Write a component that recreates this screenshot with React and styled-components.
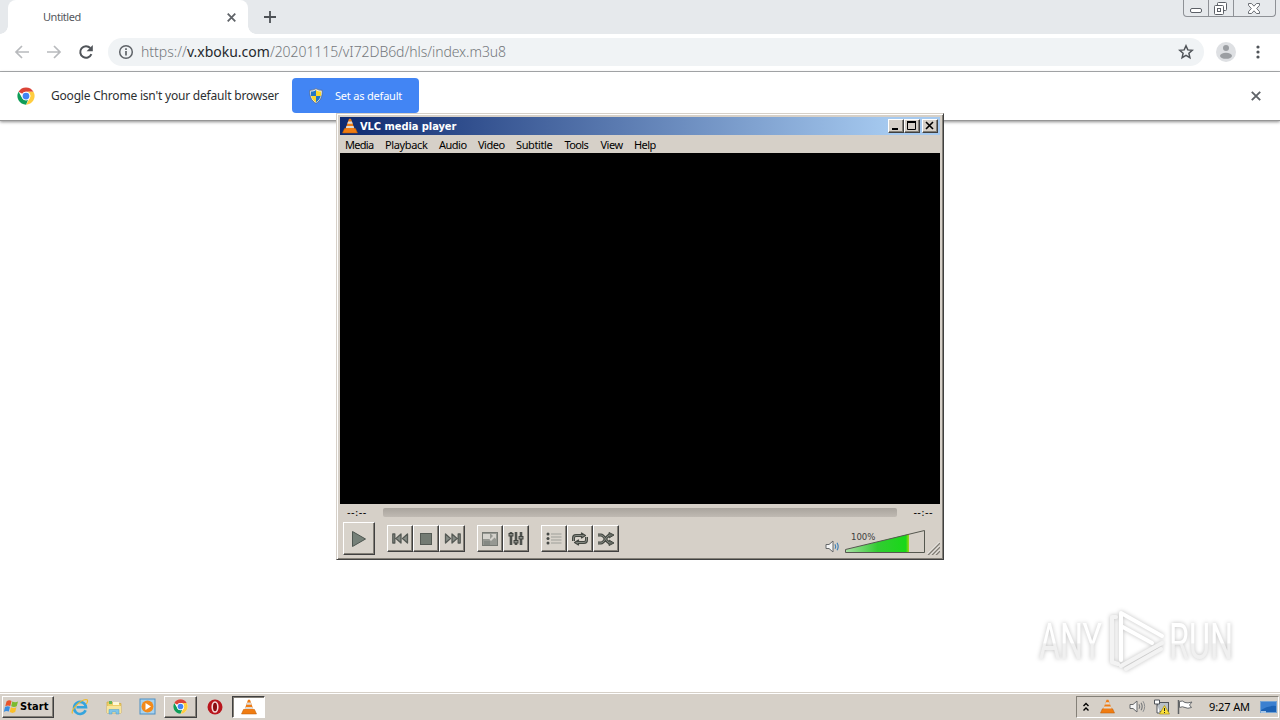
import React from "react";
import styled, { createGlobalStyle, css } from "styled-components";

const GlobalStyle = createGlobalStyle`
  * { box-sizing: border-box; }
  body { margin: 0; overflow: hidden; background: #fff; }
  svg { display: block; flex: none; }
`;

const ui = `"DejaVu Sans Condensed", "DejaVu Sans", sans-serif`;
const thin = `"Noto Sans", "DejaVu Sans", sans-serif`;

const Desktop = styled.div`
  position: relative;
  width: 1280px;
  height: 720px;
  display: flex;
  flex-direction: column;
  overflow: hidden;
  background: #fff;
  font-family: ${thin};
`;

const Label = styled.span`
  font-family: ${(p) => p.$font || thin};
  font-size: ${(p) => p.$size || 11}px;
  font-weight: ${(p) => p.$weight || 400};
  letter-spacing: ${(p) => p.$track || 0}px;
  color: ${(p) => p.$color || "#000"};
  line-height: 16px;
  white-space: pre;
`;

/* Browser */
const TabStrip = styled.div`
  height: 34px;
  flex: none;
  display: flex;
  padding-left: 8px;
  background: #e6e9ec;
`;
const Tab = styled.div`
  position: relative;
  width: 240px;
  height: 34px;
  display: flex;
  align-items: center;
  justify-content: space-between;
  padding: 0 12px 0 35px;
  background: #fff;
  border-radius: 8px 8px 0 0;
  &::before, &::after {
    content: "";
    position: absolute;
    bottom: 0;
    width: 8px;
    height: 8px;
  }
  &::before { left: -8px; background: radial-gradient(circle at 0 0, transparent 7.5px, #fff 8px); }
  &::after { right: -8px; background: radial-gradient(circle at 100% 0, transparent 7.5px, #fff 8px); }
`;
const NewTab = styled.div`
  padding: 11px 0 0 16px;
  flex: 1;
`;
const Caption = styled.div`
  display: flex;
  width: 93px;
  height: 17px;
  margin-right: 4px;
  border: 1px solid #8e9196;
  border-top: 0;
  border-radius: 0 0 4px 4px;
`;
const CaptionButton = styled.div`
  width: ${(p) => p.$w}px;
  padding: ${(p) => p.$pad};
  border-left: ${(p) => (p.$first ? "0" : "1px solid #8e9196")};
`;
const Toolbar = styled.div`
  height: 38px;
  flex: none;
  display: flex;
  align-items: center;
  padding: 0 12px 2px 12px;
  border-bottom: 1px solid #adafb2;
`;
const NavButton = styled.div`
  width: 32px;
  display: flex;
  padding-left: 2px;
`;
const Omnibox = styled.div`
  width: 1096px;
  height: 28px;
  display: flex;
  align-items: center;
  padding: 0 10px;
  border-radius: 14px;
  background: #f0f3f5;
`;
const Address = styled.div`
  flex: 1;
  padding-left: 7px;
  display: flex;
`;
const ToolbarEnd = styled.div`
  display: flex;
  align-items: center;
  gap: 20px;
  padding-left: 12px;
`;
const InfoBar = styled.div`
  height: 49px;
  flex: none;
  display: flex;
  align-items: center;
  padding: 0 19px 1px 17px;
  border-bottom: 1px solid #969696;
  box-shadow: 0 1px 3px rgba(0, 0, 0, 0.45);
`;
const InfoText = styled.div`
  width: 257px;
  padding-left: 16px;
  flex: none;
  display: flex;
`;
const DefaultButton = styled.div`
  width: 127px;
  height: 35px;
  display: flex;
  align-items: center;
  gap: 12px;
  padding-left: 17px;
  border-radius: 4px;
  background: #4285f4;
  margin-right: auto;
`;
const PageArea = styled.div`
  flex: 1;
`;

/* Classic window */
const raised = css`
  border: 1px solid;
  border-color: #fff #404040 #404040 #fff;
  box-shadow: inset -1px -1px 0 #848078;
`;
const Window = styled.div`
  position: absolute;
  left: 336px;
  top: 113px;
  width: 608px;
  height: 447px;
  display: flex;
  flex-direction: column;
  background: #d6d0c8;
  border: 1px solid;
  border-color: #d6d0c8 #404040 #404040 #d6d0c8;
  box-shadow: inset 1px 1px 0 #fff, inset -1px -1px 0 #848078;
  padding: 3px;
`;
const TitleBar = styled.div`
  height: 18px;
  flex: none;
  display: flex;
  align-items: center;
  padding: 0 2px;
  background: linear-gradient(90deg, #0e2a70, #a6caf0 92%);
`;
const TitleText = styled.div`
  flex: 1;
  padding: 1px 0 0 2px;
  display: flex;
`;
const WinButton = styled.div`
  width: 16px;
  height: 14px;
  margin-left: ${(p) => p.$gap || 0}px;
  background: #d6d0c8;
  ${raised}
`;
const MenuBar = styled.div`
  height: 18px;
  flex: none;
  display: flex;
  align-items: center;
  padding: 2px 5px 0;
`;
const MenuItem = styled.div`
  width: ${(p) => p.$w}px;
  flex: none;
  display: flex;
`;
const Video = styled.div`
  height: 351px;
  flex: none;
  background: #000;
`;
const SeekRow = styled.div`
  height: 17px;
  flex: none;
  display: flex;
  align-items: center;
  padding: 0 7px;
`;
const TimeMark = styled.div`
  width: ${(p) => p.$w}px;
  display: flex;
  justify-content: ${(p) => (p.$end ? "flex-end" : "flex-start")};
`;
const SeekTrack = styled.div`
  width: 514px;
  height: 9px;
  border-radius: 2px;
  background: linear-gradient(#a9a49d, #c0bab3);
`;
const Controls = styled.div`
  flex: 1;
  display: flex;
  padding: 1px 0 0 3px;
`;
const PlayerButton = styled.div`
  width: ${(p) => (p.$big ? 32 : 26)}px;
  height: ${(p) => (p.$big ? 33 : 27)}px;
  flex: none;
  display: flex;
  align-items: center;
  justify-content: center;
  background: #d8d3cb;
  ${raised}
`;
const Group = styled.div`
  display: flex;
  flex: none;
  padding-top: 3px;
  margin-left: ${(p) => p.$gap}px;
`;
const Volume = styled.div`
  display: flex;
  flex: none;
  margin-left: 206px;
  padding-top: 7px;
`;
const VolumeIcon = styled.div`
  padding-top: 10px;
`;
const VolumeSlider = styled.div`
  position: relative;
  width: 81px;
  margin-left: 3px;
`;
const VolumeValue = styled.div`
  position: absolute;
  left: 6px;
  top: 0;
  display: flex;
`;
const Grip = styled.div`
  padding: 20px 0 0 1px;
`;

/* Taskbar */
const Taskbar = styled.div`
  height: 28px;
  flex: none;
  display: flex;
  align-items: center;
  padding: 2px 2px 2px;
  border-top: 1px solid #d6d0c8;
  box-shadow: inset 0 1px 0 #fff;
  background: #d6d0c8;
`;
const StartButton = styled.div`
  width: 52px;
  height: 22px;
  display: flex;
  align-items: center;
  padding-left: 0;
  margin-right: 9px;
  ${raised}
`;
const QuickItem = styled.div`
  width: ${(p) => p.$w || 34}px;
  height: 22px;
  flex: none;
  display: flex;
  align-items: center;
  justify-content: center;
`;
const TaskButton = styled.div`
  width: 33px;
  height: 22px;
  flex: none;
  display: flex;
  align-items: center;
  justify-content: center;
  background: ${(p) => (p.$active ? "#fff" : "#d6d0c8")};
  ${raised}
  ${(p) =>
    p.$active &&
    css`
      border-color: #404040 #fff #fff #404040;
      box-shadow: inset 1px 1px 0 #848078;
    `}
`;
const Tray = styled.div`
  width: 203px;
  height: 22px;
  flex: none;
  margin-left: auto;
  margin-right: -1px;
  display: flex;
  align-items: center;
  padding-left: 5px;
  border: 1px solid;
  border-color: #848078 #fff #fff #848078;
`;
const TrayItem = styled.div`
  width: ${(p) => p.$w}px;
  flex: none;
  display: flex;
`;

const Watermark = styled.div`
  position: absolute;
  left: 1030px;
  top: 600px;
  filter: drop-shadow(0 0 2px rgba(0, 0, 0, 0.25));
`;

const ChromeLogo = ({ size = 16 }) => (
  <svg width={size} height={size} viewBox="0 0 48 48">
    <circle cx="24" cy="24" r="23" fill="#fff" />
    <path d="M24 1a23 23 0 0 1 19.900 11.500H24A11.500 11.500 0 0 0 14 18.300L4.100 12.500A23 23 0 0 1 24 1z" fill="#db4437" />
    <path d="M43.900 12.500A23 23 0 0 1 24 47l10-17.300A11.500 11.500 0 0 0 34 18.200l-6-5.700z" fill="#ffcd40" />
    <path d="M24 47A23 23 0 0 1 4.100 12.500L14 29.700a11.500 11.500 0 0 0 15.500 4.500z" fill="#0f9d58" />
    <circle cx="24" cy="24" r="11.500" fill="#fff" />
    <circle cx="24" cy="24" r="9" fill="#4285f4" />
  </svg>
);

const Cone = ({ size = 16 }) => (
  <svg width={size} height={size} viewBox="0 0 16 16">
    <path d="M2.500 10.500h11l2 4.500H.5z" fill="#f07c10" stroke="#b95a08" strokeWidth=".5" />
    <path d="M7 .8h2l3.800 10.700c-2 1.500-7.600 1.500-9.600 0z" fill="#f07c14" />
    <path d="M6.100 3.500h3.800l.8 2.300H5.300zM4.500 8h7l.7 2H3.800z" fill="#dedbd6" />
  </svg>
);

const Cross = ({ size = 9, color = "#5f6368", w = 1.7 }) => (
  <svg width={size} height={size} viewBox="0 0 10 10">
    <path d="M.8.8l8.400 8.400M9.200.8L.8 9.200" stroke={color} strokeWidth={w} fill="none" />
  </svg>
);

const Shield = () => (
  <svg width="14" height="16" viewBox="0 0 14 16">
    <path d="M7 .6c2 1.300 4 1.700 6.200 1.700.3 6-1.400 10.500-6.200 13-4.800-2.500-6.500-7-6.200-13C3 2.300 5 1.900 7 .6z" fill="#e8eef4" stroke="#59606a" strokeWidth=".7" />
    <path d="M7 2v6H2V3.500C4 3.500 5.500 3 7 2zM7 8h4.700c-.6 2.600-2 4.700-4.700 6.200z" fill="#2376c6" />
    <path d="M7 2c1.500 1 3 1.500 5 1.500V8H7zM7 8v6.200C4.300 12.700 2.800 10.600 2.200 8z" fill="#fbd72b" />
  </svg>
);

const Speaker = ({ blue }) => (
  <svg width="17" height="15" viewBox="0 0 17 15">
    <path d="M1 5.500h3L8 2v11L4 9.500H1z" fill="#f5f5f5" stroke="#66686a" />
    <path d="M10 5.200q1.300 2.300 0 4.600M12 3.700q2.300 3.800 0 7.600" fill="none" stroke={blue ? "#3d80b8" : "#77797b"} strokeWidth="1.100" />
    {!blue && <path d="M14 2.200q3.300 5.300 0 10.600" fill="none" stroke="#8b8d8f" />}
  </svg>
);

const menu = [
  ["Media", 40, -0.7], ["Playback", 54, -0.35], ["Audio", 39, -0.5], ["Video", 38, -0.5],
  ["Subtitle", 48.5, -0.4], ["Tools", 36, -0.6], ["View", 33.5, -0.5], ["Help", 30, -0.6],
];

export default function App() {
  return (
    <Desktop>
      <GlobalStyle />
      <TabStrip>
        <Tab>
          <Label $size={11} $track={-0.45} $color="#55585c">Untitled</Label>
          <Cross size={9} w={2} />
        </Tab>
        <NewTab>
          <svg width="12" height="12" viewBox="0 0 12 12"><path d="M6 0v12M0 6h12" stroke="#4d5156" strokeWidth="1.800" /></svg>
        </NewTab>
        <Caption>
          <CaptionButton $w={24} $pad="8px 0 0 6px" $first>
            <svg width="12" height="5"><rect x=".5" y=".5" width="11" height="4" rx="1.500" fill="#fff" stroke="#5c6067" /></svg>
          </CaptionButton>
          <CaptionButton $w={25} $pad="2px 0 0 5px">
            <svg width="13" height="13" fill="#fff" stroke="#5c6067">
              <rect x="3.500" y=".5" width="9" height="8" rx="1" />
              <rect x=".5" y="3.500" width="9" height="9" rx="1" />
              <rect x="3.500" y="6.500" width="3" height="3" />
            </svg>
          </CaptionButton>
          <CaptionButton $w={42} $pad="3px 0 0 14px">
            <svg width="12" height="11" viewBox="0 0 12 11"><path d="M.5.5h3L6 3.200 8.500.5h3v1.800L8.700 5.500l2.800 3.200v1.800h-3L6 7.800l-2.500 2.700h-3V8.700l2.800-3.200L.5 2.300z" fill="#fff" stroke="#5c6067" strokeWidth=".9" /></svg>
          </CaptionButton>
        </Caption>
      </TabStrip>
      <Toolbar>
        <NavButton><svg width="16" height="16" viewBox="0 0 16 16"><path d="M15 8H2M8 2L2 8l6 6" fill="none" stroke="#b8babd" strokeWidth="1.700" /></svg></NavButton>
        <NavButton><svg width="16" height="16" viewBox="0 0 16 16"><path d="M1 8h13M8 2l6 6-6 6" fill="none" stroke="#b8babd" strokeWidth="1.700" /></svg></NavButton>
        <NavButton><svg width="16" height="16" viewBox="0 0 16 16"><path d="M13.400 10.200A5.800 5.800 0 1 1 12.300 4" fill="none" stroke="#505459" strokeWidth="2" /><path d="M14.800 1v6.200H8.600z" fill="#505459" /></svg></NavButton>
        <Omnibox>
          <svg width="16" height="16" viewBox="0 0 16 16"><circle cx="8" cy="8" r="6.300" fill="none" stroke="#5f6368" strokeWidth="1.500" /><path d="M8 7v4.500M8 4.200v1.700" stroke="#5f6368" strokeWidth="1.700" /></svg>
          <Address>
            <Label $size={14} $weight={300} $color="#74787c">https://</Label>
            <Label $size={14} $weight={400} $color="#25282c">v.xboku.com</Label>
            <Label $size={14} $weight={300} $track={-0.07} $color="#74787c">/20201115/vI72DB6d/hls/index.m3u8</Label>
          </Address>
          <svg width="16" height="16" viewBox="0 0 16 16"><path d="M8 1.800l1.800 4.100 4.500.4-3.400 3 1 4.400L8 11.400l-3.900 2.300 1-4.400-3.400-3 4.500-.4z" fill="none" stroke="#505459" strokeWidth="1.500" /></svg>
        </Omnibox>
        <ToolbarEnd>
          <svg width="20" height="20" viewBox="0 0 20 20"><circle cx="10" cy="10" r="10" fill="#dee0e3" /><circle cx="10" cy="6" r="3" fill="#9b9ea2" /><ellipse cx="10" cy="13.800" rx="6" ry="3" fill="#9b9ea2" /></svg>
          <svg width="4" height="14" fill="#505459"><circle cx="2" cy="2" r="1.600" /><circle cx="2" cy="7" r="1.600" /><circle cx="2" cy="12" r="1.600" /></svg>
        </ToolbarEnd>
      </Toolbar>
      <InfoBar>
        <ChromeLogo size={18} />
        <InfoText><Label $size={12} $track={-0.2} $color="#2d2f31">Google Chrome isn't your default browser</Label></InfoText>
        <DefaultButton>
          <Shield />
          <Label $size={11} $track={-0.2} $color="#fff">Set as default</Label>
        </DefaultButton>
        <Cross size={10} w={1.9} />
      </InfoBar>
      <PageArea />
      <Taskbar>
        <StartButton>
          <svg width="17" height="16" viewBox="0 0 17 16">
            <path d="M3.500 2.500q2.500-2 5-.5L7.300 7q-2.500-1.300-5 .2z" fill="#e8542a" />
            <path d="M9.300 2.400q3 1.600 5.700 0L13.700 7.200q-2.700 1.600-5.500 0z" fill="#7bbb30" />
            <path d="M2 8.100q2.500-1.600 5-.3L5.800 12.600q-2.500-1.300-5 .3z" fill="#3a8ee0" />
            <path d="M7.900 8.200q2.800 1.600 5.500 0l-1.200 4.900q-2.700 1.600-5.500 0z" fill="#fbc02a" />
          </svg>
          <Label $font={ui} $weight={700} $size={11} $track={0.1}>Start</Label>
        </StartButton>
        <QuickItem>
          <svg width="18" height="18" viewBox="0 0 18 18">
            <path d="M14.600 12.200A6 6 0 1 1 15 9.300H5.500" fill="none" stroke="#35a4dd" strokeWidth="2.600" />
            <path d="M1.500 15.500C-.5 12 9 2 15 1.500c2.500 0 1.500 3 .3 4.500" fill="none" stroke="#eebb2d" strokeWidth="1.200" />
          </svg>
        </QuickItem>
        <QuickItem>
          <svg width="16" height="16" viewBox="0 0 16 16">
            <path d="M1 3h5l1 1.500h8V14H1z" fill="#edcf68" stroke="#d2a93c" strokeWidth=".7" />
            <path d="M3 2h3v3H3z" fill="#67b558" /><path d="M7 3h6v3H7z" fill="#fff8d6" />
            <path d="M1 7h14v7H1z" fill="#f8e59b" />
            <path d="M3 15v-4.500h10V15h-3v-2H6v2z" fill="#7fc4e8" stroke="#4c9fcb" strokeWidth=".5" />
          </svg>
        </QuickItem>
        <QuickItem $w={33}>
          <svg width="17" height="17" viewBox="0 0 17 17">
            <rect x="1" y="1" width="15" height="15" fill="#a8d2ee" stroke="#4c8fc4" />
            <circle cx="8.500" cy="8.500" r="6" fill="#f28a1b" /><path d="M6.500 5l5.500 3.500L6.500 12z" fill="#fff" />
          </svg>
        </QuickItem>
        <TaskButton><ChromeLogo size={15} /></TaskButton>
        <QuickItem $w={35}>
          <svg width="16" height="16" viewBox="0 0 16 16"><circle cx="8" cy="8" r="7.500" fill="#b9151c" /><ellipse cx="8" cy="8" rx="2.800" ry="5" fill="#8a0b10" stroke="#f4dada" strokeWidth="1.600" /></svg>
        </QuickItem>
        <TaskButton $active><Cone size={16} /></TaskButton>
        <Tray>
          <TrayItem $w={18}>
            <svg width="8" height="10" viewBox="0 0 8 10"><path d="M1.500 4L4 1.500 6.500 4M1.500 8.500L4 6l2.500 2.500" fill="none" stroke="#000" strokeWidth="1.400" /></svg>
          </TrayItem>
          <TrayItem $w={29}><Cone size={15} /></TrayItem>
          <TrayItem $w={24}><Speaker /></TrayItem>
          <TrayItem $w={24}>
            <svg width="17" height="16" viewBox="0 0 17 16">
              <rect x="4.500" y="3.500" width="11" height="9" fill="#b9c0c6" stroke="#50545a" />
              <path d="M7 14.500h6" stroke="#50545a" />
              <path d="M1.500 1v4h5V1zM4 5v9h3" fill="#fff" stroke="#50545a" />
              <path d="M11.500 6.500l5 8.500h-10z" fill="#fce13a" stroke="#a98f13" strokeWidth=".7" /><path d="M11.500 9v3M11.500 13v1" stroke="#222" />
            </svg>
          </TrayItem>
          <TrayItem $w={32}>
            <svg width="17" height="16" viewBox="0 0 17 16"><path d="M1.500 1v14" stroke="#5f6265" strokeWidth="1.500" /><path d="M2.500 2.500q3-1.500 5.500 1 2.500 1 7-.5l-2.500 3 2 2.500q-4 1.500-6.500 0Q5.500 7 2.500 8.500z" fill="#fff" stroke="#66696c" /></svg>
          </TrayItem>
          <TrayItem $w={51}><Label $size={11} $track={-0.1}>9:27 AM</Label></TrayItem>
          <svg width="17" height="14" viewBox="0 0 17 14"><rect x=".5" y="1.500" width="16" height="11" fill="#1c62b5" stroke="#75a3d3" /><path d="M1 2h15v4Q8 5 1 10z" fill="#3b80d0" /><rect x="1" y="11" width="5" height="2" fill="#a7c5e4" /></svg>
        </Tray>
      </Taskbar>

      <Window>
        <TitleBar>
          <Cone size={16} />
          <TitleText><Label $font={ui} $weight={700} $size={11} $track={-0.05} $color="#fff">VLC media player</Label></TitleText>
          <WinButton><svg width="14" height="12"><path d="M3 9h6" stroke="#000" strokeWidth="2" /></svg></WinButton>
          <WinButton><svg width="14" height="12"><path d="M2.500 2v7.500h8V2M2 2h9" fill="none" stroke="#000" /><path d="M2 2h9" stroke="#000" strokeWidth="2" /></svg></WinButton>
          <WinButton $gap={2}><svg width="14" height="12"><path d="M3 2l7 7M10 2L3 9" stroke="#000" strokeWidth="1.600" /></svg></WinButton>
        </TitleBar>
        <MenuBar>
          {menu.map(([name, w, t]) => (
            <MenuItem key={name} $w={w}><Label $size={11} $track={t}>{name}</Label></MenuItem>
          ))}
        </MenuBar>
        <Video />
        <SeekRow>
          <TimeMark $w={36}><Label $size={11} $track={0.4} $font={ui}>--:--</Label></TimeMark>
          <SeekTrack />
          <TimeMark $w={36} $end><Label $size={11} $track={0.4} $font={ui}>--:--</Label></TimeMark>
        </SeekRow>
        <Controls>
          <PlayerButton $big>
            <svg width="16" height="18" viewBox="0 0 16 18"><path d="M1.500 1.500L14.500 9l-13 7.500z" fill="#758078" stroke="#4d5650" strokeLinejoin="round" /></svg>
          </PlayerButton>
          <Group $gap={12}>
            <PlayerButton>
              <svg width="17" height="11" viewBox="0 0 17 11" fill="#858b85" stroke="#555a55" strokeWidth="1.300"><path d="M.8 1h2v9h-2zM9 1v9L4 5.500zM15.500 1v9l-5-4.500z" strokeLinejoin="round" /></svg>
            </PlayerButton>
            <PlayerButton>
              <svg width="12" height="12"><rect x=".5" y=".5" width="11" height="11" fill="#737b73" stroke="#555b55" /></svg>
            </PlayerButton>
            <PlayerButton>
              <svg width="17" height="11" viewBox="0 0 17 11" fill="#858b85" stroke="#555a55" strokeWidth="1.300"><path d="M14.200 1h2v9h-2zM8 1v9l5-4.500zM1.500 1v9l5-4.500z" strokeLinejoin="round" /></svg>
            </PlayerButton>
          </Group>
          <Group $gap={12}>
            <PlayerButton>
              <svg width="16" height="14" viewBox="0 0 16 14"><rect x=".5" y=".5" width="15" height="13" fill="#969892" stroke="#777a74" /><path d="M1 2h7v5H1z" fill="#d6d4ce" /><path d="M9 2h5v5l-1.500-1.500L9 9 7.500 7.500 11 4z" fill="#d4d2cc" /><path d="M2 9h6v4H2z" fill="#858983" /></svg>
            </PlayerButton>
            <PlayerButton>
              <svg width="16" height="15" viewBox="0 0 16 15"><path d="M3 1v13M8 1v13M13 1v13" stroke="#4e514d" strokeWidth="2.600" /><g fill="#8e918b" stroke="#40433f"><rect x="1" y="2.500" width="4" height="2.500" /><rect x="6" y="9.500" width="4" height="2.500" /><rect x="11" y="5.500" width="4" height="2.500" /></g></svg>
            </PlayerButton>
          </Group>
          <Group $gap={12}>
            <PlayerButton>
              <svg width="16" height="13" viewBox="0 0 16 13"><path d="M5 2h10.500M5 5h10.500M5 8h10.500M5 11h10.500" stroke="#9d9f9a" strokeWidth="1.200" /><g fill="#454845"><circle cx="2" cy="2" r="1.500" /><circle cx="2" cy="6.500" r="1.500" /><circle cx="2" cy="11" r="1.500" /></g></svg>
            </PlayerButton>
            <PlayerButton>
              <svg width="18" height="14" viewBox="0 0 18 14">
                <g fill="none" stroke="#444842" strokeWidth="3"><path d="M2.500 9V6q0-2.500 2.500-2.500h6" /><path d="M15.500 5v3q0 2.500-2.500 2.500H7" /></g>
                <path d="M10.500 1v5l4-2.500zM7.500 8v5l-4-2.500z" fill="#858982" stroke="#444842" strokeWidth="1.200" strokeLinejoin="round" />
                <g fill="none" stroke="#858982" strokeWidth="1"><path d="M2.500 9V6q0-2.500 2.500-2.500h6M15.500 5v3q0 2.500-2.500 2.500H7" /></g>
              </svg>
            </PlayerButton>
            <PlayerButton>
              <svg width="18" height="14" viewBox="0 0 18 14"><path d="M1 3h3q2 0 4.500 4T13 11M1 11h3q2 0 4.500-4T13 3" fill="none" stroke="#444842" strokeWidth="3" /><path d="M12 .5L17 3l-5 3zM12 8l5 3-5 2.500z" fill="#656a63" stroke="#444842" /><path d="M1 3h3q2 0 4.500 4T13 11M1 11h3q2 0 4.500-4T13 3" fill="none" stroke="#858982" /></svg>
            </PlayerButton>
          </Group>
          <Volume>
            <VolumeIcon><Speaker blue /></VolumeIcon>
            <VolumeSlider>
              <VolumeValue><Label $size={9.5} $color="#3e3e3e" $font={ui}>100%</Label></VolumeValue>
              <svg width="81" height="25" viewBox="0 0 81 25">
                <defs><linearGradient id="vol"><stop offset="0" stopColor="#a9dfa4" /><stop offset=".5" stopColor="#32cc32" /><stop offset=".95" stopColor="#18d818" /><stop offset="1" stopColor="#a6d51a" /></linearGradient></defs>
                <path d="M1 20.500L64 5v18H1z" fill="url(#vol)" />
                <path d="M.5 20.500L79.500 1.500v22H.5z" fill="none" stroke="#55574f" />
              </svg>
            </VolumeSlider>
          </Volume>
          <Grip>
            <svg width="13" height="13"><path d="M1 13L13 1M5 13l8-8M9 13l4-4" stroke="#817d75" strokeWidth="1.500" /><path d="M0 12.500L12.500 0M4 12.500L12.500 4M8 12.500L12.500 8" stroke="#fff" strokeWidth=".7" /></svg>
          </Grip>
        </Controls>
      </Window>

      <Watermark>
        <svg width="240" height="90" viewBox="0 0 240 90" overflow="visible">
          <defs><linearGradient id="wm" x1="0" y1="0" x2="0" y2="1"><stop offset=".52" stopColor="#fff" /><stop offset=".53" stopColor="#f0f0f0" /></linearGradient></defs>
          <g fill="url(#wm)" fontFamily="Roboto, sans-serif" fontSize="50">
            <text x="9" y="59" textLength="63" lengthAdjust="spacingAndGlyphs">ANY</text>
            <text x="139" y="59" textLength="64" lengthAdjust="spacingAndGlyphs">RUN</text>
          </g>
          <g fill="none" stroke="#fff" strokeWidth="4" strokeLinejoin="round" strokeLinecap="round">
            <path d="M91 60V13l41 23M91 26l31 17" />
            <path d="M86 17h-4v45l6 2M132 43L91 66M96 69l35-20" stroke="#f3f3f3" />
          </g>
        </svg>
      </Watermark>
    </Desktop>
  );
}
